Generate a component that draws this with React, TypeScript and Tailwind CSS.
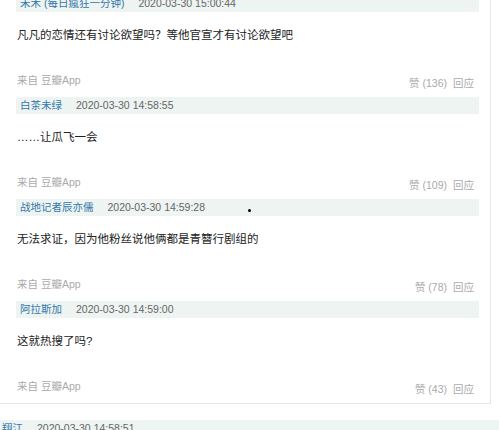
import React from "react";

type C = { name: string; date: string; body: string; likes: number };

const comments: C[] = [
  { name: "禾木 (每日瘋狂一分钟)", date: "2020-03-30 15:00:44", body: "凡凡的恋情还有讨论欲望吗？等他官宣才有讨论欲望吧", likes: 136 },
  { name: "白茶未绿", date: "2020-03-30 14:58:55", body: "……让瓜飞一会", likes: 109 },
  { name: "战地记者辰亦儒", date: "2020-03-30 14:59:28", body: "无法求证，因为他粉丝说他俩都是青簪行剧组的", likes: 78 },
  { name: "阿拉斯加", date: "2020-03-30 14:59:00", body: "这就热搜了吗?", likes: 43 },
];

const font = { fontFamily: '"Liberation Sans", "Noto Sans CJK SC", sans-serif' };

function Header({ name, date, className = "" }: { name: string; date: string; className?: string }) {
  return (
    <div className={`h-[17px] bg-[#eef4f2] flex items-center text-[10.5px] leading-[17px] whitespace-nowrap ${className}`}>
      <span className="text-[#3377aa]">{name}</span>
      <span className="ml-[14px] text-[#666]">{date}</span>
    </div>
  );
}

function Comment({ c }: { c: C }) {
  return (
    <div className="flex flex-col">
      <Header name={c.name} date={c.date} className="pl-[4px]" />
      <div className="pt-[15px] text-[11.5px] leading-[16px] text-[#222] pl-px whitespace-nowrap">{c.body}</div>
      <div className="h-[54px] flex justify-between items-start text-[10.5px] leading-[14px] text-[#aaa] whitespace-nowrap">
        <div className="pt-[30px] pl-px">来自 豆瓣App</div>
        <div className="pt-[33px] pr-[5px] flex gap-[6px]">
          <span>赞 ({c.likes})</span>
          <span>回应</span>
        </div>
      </div>
    </div>
  );
}

export default function App() {
  return (
    <div className="relative w-[499px] h-[430px] overflow-hidden bg-white" style={font}>
      <div className="w-[491px] -mt-[5px] pl-[16px] pr-[11px] border-r border-b border-[#e6e6e6]">
        {comments.map((c, i) => (
          <Comment key={i} c={c} />
        ))}
      </div>
      <div className="mt-[16px]">
        <Header name="翔江" date="2020-03-30 14:58:51" className="pl-[2px]" />
      </div>
      <div className="absolute left-[248px] top-[209px] w-[3px] h-[3px] rounded-full bg-black" />
    </div>
  );
}
